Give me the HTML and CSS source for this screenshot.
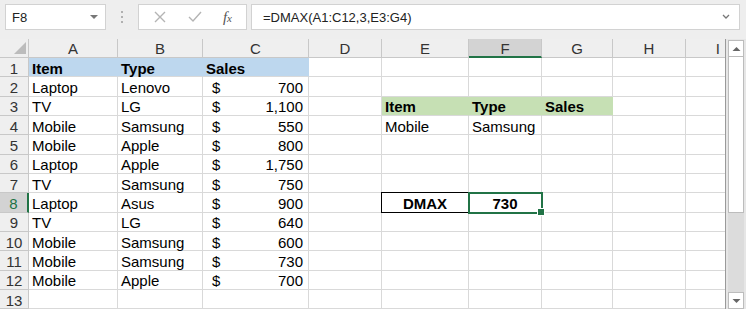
FILE: index.html
```html
<!DOCTYPE html>
<html lang="en">
<head>
    <meta charset="UTF-8">
    <meta name="viewport" content="width=device-width, initial-scale=1.0">
    <title>DMAX</title>
    <link rel="stylesheet" href="styles.css">
</head>
<body>
    <div class="formula-bar">
        <div class="name-box">
            <span>F8</span>
            <span class="caret"></span>
        </div>
        <div class="grip"><i></i><i></i><i></i></div>
        <div class="fx-buttons">
            <svg width="14" height="14" viewBox="0 0 14 14"><path d="M2 2 L12 12 M12 2 L2 12" stroke="#b4b4b4" stroke-width="1.4" fill="none"/></svg>
            <svg width="16" height="14" viewBox="0 0 16 14"><path d="M2 7 L6 11 L14 2" stroke="#b4b4b4" stroke-width="1.4" fill="none"/></svg>
            <span class="fx">f<small>x</small></span>
        </div>
        <div class="formula-input">
            <span>=DMAX(A1:C12,3,E3:G4)</span>
            <svg width="10" height="8" viewBox="0 0 10 8"><path d="M2 2 L5 5 L8 2" stroke="#777" stroke-width="1.3" fill="none"/></svg>
        </div>
    </div>

    <div class="sheet">
        <div class="grid">
            <div class="corner"><span class="tri"></span></div>
            <div class="col-head">A</div><div class="col-head">B</div><div class="col-head">C</div><div class="col-head">D</div><div class="col-head">E</div><div class="col-head sel">F</div><div class="col-head">G</div><div class="col-head">H</div><div class="col-head last">I</div>

            <div class="row-head">1</div>
            <div class="cell head-blue">Item</div><div class="cell head-blue">Type</div><div class="cell head-blue">Sales</div>
            <div class="cell"></div><div class="cell"></div><div class="cell"></div><div class="cell"></div><div class="cell"></div><div class="cell"></div>

            <div class="row-head">2</div>
            <div class="cell">Laptop</div><div class="cell">Lenovo</div><div class="cell money"><span>$</span><span>700</span></div>
            <div class="cell"></div><div class="cell"></div><div class="cell"></div><div class="cell"></div><div class="cell"></div><div class="cell"></div>

            <div class="row-head">3</div>
            <div class="cell">TV</div><div class="cell">LG</div><div class="cell money"><span>$</span><span>1,100</span></div>
            <div class="cell"></div><div class="cell head-green">Item</div><div class="cell head-green">Type</div><div class="cell head-green">Sales</div><div class="cell"></div><div class="cell"></div>

            <div class="row-head">4</div>
            <div class="cell">Mobile</div><div class="cell">Samsung</div><div class="cell money"><span>$</span><span>550</span></div>
            <div class="cell"></div><div class="cell">Mobile</div><div class="cell">Samsung</div><div class="cell"></div><div class="cell"></div><div class="cell"></div>

            <div class="row-head">5</div>
            <div class="cell">Mobile</div><div class="cell">Apple</div><div class="cell money"><span>$</span><span>800</span></div>
            <div class="cell"></div><div class="cell"></div><div class="cell"></div><div class="cell"></div><div class="cell"></div><div class="cell"></div>

            <div class="row-head">6</div>
            <div class="cell">Laptop</div><div class="cell">Apple</div><div class="cell money"><span>$</span><span>1,750</span></div>
            <div class="cell"></div><div class="cell"></div><div class="cell"></div><div class="cell"></div><div class="cell"></div><div class="cell"></div>

            <div class="row-head">7</div>
            <div class="cell">TV</div><div class="cell">Samsung</div><div class="cell money"><span>$</span><span>750</span></div>
            <div class="cell"></div><div class="cell"></div><div class="cell"></div><div class="cell"></div><div class="cell"></div><div class="cell"></div>

            <div class="row-head sel">8</div>
            <div class="cell">Laptop</div><div class="cell">Asus</div><div class="cell money"><span>$</span><span>900</span></div>
            <div class="cell"></div><div class="cell label">DMAX</div><div class="cell active">730</div><div class="cell"></div><div class="cell"></div><div class="cell"></div>

            <div class="row-head">9</div>
            <div class="cell">TV</div><div class="cell">LG</div><div class="cell money"><span>$</span><span>640</span></div>
            <div class="cell"></div><div class="cell"></div><div class="cell"></div><div class="cell"></div><div class="cell"></div><div class="cell"></div>

            <div class="row-head">10</div>
            <div class="cell">Mobile</div><div class="cell">Samsung</div><div class="cell money"><span>$</span><span>600</span></div>
            <div class="cell"></div><div class="cell"></div><div class="cell"></div><div class="cell"></div><div class="cell"></div><div class="cell"></div>

            <div class="row-head">11</div>
            <div class="cell">Mobile</div><div class="cell">Samsung</div><div class="cell money"><span>$</span><span>730</span></div>
            <div class="cell"></div><div class="cell"></div><div class="cell"></div><div class="cell"></div><div class="cell"></div><div class="cell"></div>

            <div class="row-head">12</div>
            <div class="cell">Mobile</div><div class="cell">Apple</div><div class="cell money"><span>$</span><span>700</span></div>
            <div class="cell"></div><div class="cell"></div><div class="cell"></div><div class="cell"></div><div class="cell"></div><div class="cell"></div>

            <div class="row-head">13</div>
            <div class="cell"></div><div class="cell"></div><div class="cell"></div>
            <div class="cell"></div><div class="cell"></div><div class="cell"></div><div class="cell"></div><div class="cell"></div><div class="cell"></div>
        </div>
        <div class="scrollbar">
            <div class="sb-btn"><svg width="9" height="6" viewBox="0 0 9 6"><path d="M0.5 5 L4.5 1 L8.5 5 Z" fill="#666"/></svg></div>
            <div class="sb-thumb"></div>
            <div class="sb-track"></div>
            <div class="sb-btn"><svg width="9" height="6" viewBox="0 0 9 6"><path d="M0.5 1 L4.5 5 L8.5 1 Z" fill="#666"/></svg></div>
        </div>
    </div>
</body>
</html>
```

FILE: styles.css
```css
* {
    margin: 0;
    padding: 0;
    box-sizing: border-box;
}
body {
    font-family: 'Liberation Sans', Arial, sans-serif;
    background-color: #eeeeee;
    width: 746px;
    height: 309px;
    overflow: hidden;
}

/* formula bar */
.formula-bar {
    height: 39px;
    display: flex;
    align-items: flex-start;
    padding: 4px 6px 0 5px;
    font-size: 13px;
    color: #222;
}
.name-box {
    width: 101px;
    height: 26px;
    background-color: #fff;
    border: 1px solid #d2d2d2;
    display: flex;
    align-items: center;
    justify-content: space-between;
    padding: 0 7px 0 6px;
}
.caret {
    width: 0;
    height: 0;
    border-left: 4px solid transparent;
    border-right: 4px solid transparent;
    border-top: 4px solid #777;
}
.grip {
    width: 32px;
    height: 26px;
    display: flex;
    flex-direction: column;
    align-items: center;
    justify-content: center;
    gap: 3px;
}
.grip i {
    width: 2px;
    height: 2px;
    background-color: #b0b0b0;
}
.fx-buttons {
    width: 109px;
    height: 26px;
    background-color: #fff;
    border: 1px solid #d2d2d2;
    display: flex;
    align-items: center;
    justify-content: space-around;
    padding: 0 4px;
}
.fx {
    font-family: 'Liberation Serif', serif;
    font-style: italic;
    font-size: 15px;
    color: #555;
}
.fx small {
    font-size: 11px;
}
.formula-input {
    flex: 1;
    height: 26px;
    margin-left: 4px;
    background-color: #fff;
    border: 1px solid #d2d2d2;
    display: flex;
    align-items: center;
    justify-content: space-between;
    padding: 0 8px 0 11px;
}

/* sheet */
.sheet {
    display: flex;
    height: 270px;
}
.grid {
    width: 726px;
    display: grid;
    grid-template-columns: 29px 89px 85px 106px 73px 87px 73px 71px 73px 40px;
    grid-template-rows: 19px repeat(13, 19.33px);
    background-color: #fff;
    border-right: 1px solid #9a9a9a;
    font-size: 15px;
    overflow: hidden;
}
.corner,
.col-head,
.row-head {
    background-color: #efefef;
    color: #333;
    border-right: 1px solid #c8c8c8;
    border-bottom: 1px solid #c8c8c8;
    display: flex;
    align-items: center;
    justify-content: center;
}
.col-head {
    padding-top: 1px;
}
.row-head {
    padding-top: 2px;
}
.corner {
    align-items: flex-end;
    justify-content: flex-end;
    padding: 0 2px 3px 0;
}
.tri {
    width: 0;
    height: 0;
    border-left: 12px solid transparent;
    border-bottom: 12px solid #bcbcbc;
}
.col-head.last {
    justify-content: flex-end;
    border-right: none;
    padding-right: 6px;
}
.col-head.sel {
    background-color: #d3d3d3;
    border-bottom: 2px solid #217346;
}
.row-head.sel {
    background-color: #d3d3d3;
    color: #217346;
    border-right: 2px solid #217346;
}
.cell {
    border-right: 1px solid #d9d9d9;
    border-bottom: 1px solid #d9d9d9;
    padding: 2px 3px 0;
    display: flex;
    align-items: center;
    white-space: nowrap;
    color: #000;
}
.money {
    justify-content: space-between;
    padding: 2px 5px 0 9px;
}
.head-blue {
    background-color: #bdd7ee;
    border-right-color: #bdd7ee;
    font-weight: bold;
}
.head-green {
    background-color: #c6e0b4;
    border-right-color: #c6e0b4;
    font-weight: bold;
}
.label {
    font-weight: bold;
    justify-content: center;
    border: 1px solid #000;
    margin: -1px 0 0 -1px;
}
.active {
    font-weight: bold;
    justify-content: center;
    position: relative;
}
.active::before {
    content: '';
    position: absolute;
    inset: -1px -2px -2px -1px;
    border: 2px solid #217346;
}
.active::after {
    content: '';
    position: absolute;
    right: -4px;
    bottom: -4px;
    width: 6px;
    height: 6px;
    background-color: #217346;
    border: 1px solid #fff;
}

/* scrollbar */
.scrollbar {
    width: 20px;
    display: flex;
    flex-direction: column;
    padding: 1px 2px 0 2px;
    background-color: #e6e6e6;
}
.sb-btn {
    height: 17px;
    background-color: #fff;
    border: 1px solid #bcbcbc;
    display: flex;
    align-items: center;
    justify-content: center;
}
.sb-thumb {
    height: 156px;
    background-color: #fff;
    border: 1px solid #bcbcbc;
    border-top: none;
}
.sb-track {
    flex: 1;
    background-color: #dcdcdc;
}
```
